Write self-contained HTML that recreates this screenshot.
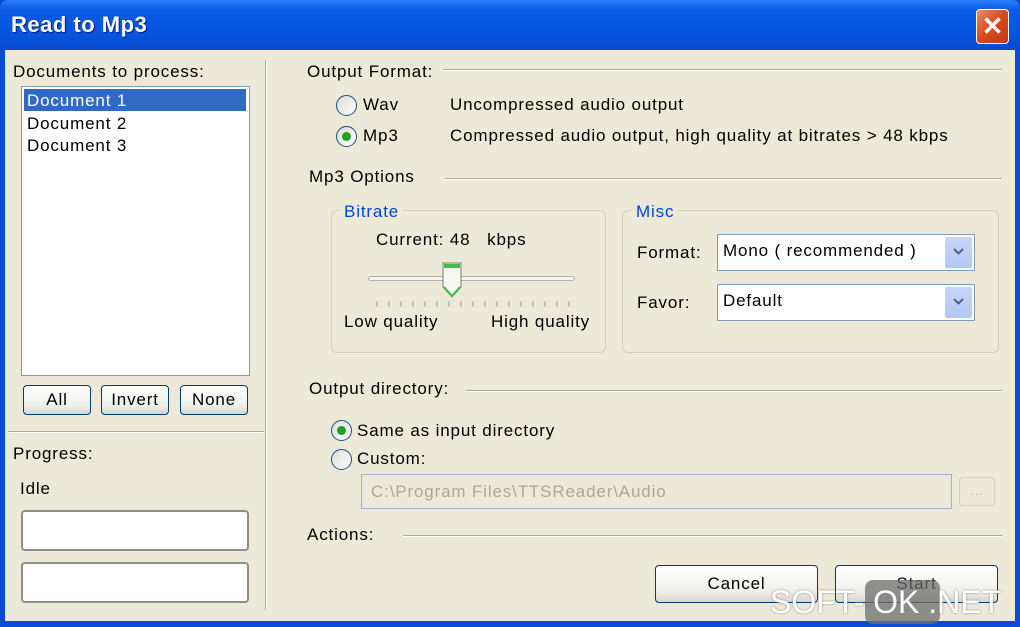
<!DOCTYPE html>
<html><head><meta charset="utf-8"><style>
*{box-sizing:border-box;margin:0;padding:0}
body{width:1020px;height:627px;overflow:hidden;background:#0a4bd6;font-family:"Liberation Sans",sans-serif;font-size:17px;letter-spacing:0.85px;color:#000;position:relative}
.a{position:absolute;white-space:nowrap}
.win{position:absolute;left:5px;top:50px;width:1010px;height:571px;background:#ECE9D8}
.title{position:absolute;left:0;top:0;width:1020px;height:50px;background:linear-gradient(#2a7ef5,#0a5ae6 20%,#0654e0 70%,#0748c8);border-radius:8px 8px 0 0}
.btn{position:absolute;border:1px solid #003c74;border-radius:4px;background:linear-gradient(#fff,#f0f0ea 70%,#d8d6cc);text-align:center}
.hl{position:absolute;height:2px;border-top:1px solid #aca899;border-bottom:1px solid #fff}
.radio{position:absolute;width:21px;height:21px;border-radius:50%;border:1px solid #1c5180;background:linear-gradient(135deg,#dcdcd6,#fff)}
.radio.on::after{content:"";position:absolute;left:5px;top:5px;width:9px;height:9px;border-radius:50%;background:#21a121}
.grp{position:absolute;border:1px solid #d0d0bf;border-radius:6px}
.combo{position:absolute;border:1px solid #7f9db9;background:#fff;padding:6px 0 0 5px}
.dd{position:absolute;right:2px;top:2px;bottom:2px;width:27px;background:linear-gradient(#c6d5fc,#b3c8f5);border-radius:2px}
.dd svg{position:absolute;left:8px;top:11px}
.box{position:absolute;border:2px solid #8e8f8a;border-radius:4px;background:#fff}
</style></head><body>
<div class="title"></div>
<div class="a" style="left:11px;top:12px;font-size:22px;font-weight:bold;color:#fff;letter-spacing:0.5px;text-shadow:1px 1px 1px #0a1e6e">Read to Mp3</div>
<div class="a" style="left:976px;top:9px;width:33px;height:35px;border:1px solid #fff;border-radius:4px;background:linear-gradient(135deg,#e88a6a,#d8491f 50%,#c2381a);color:#fff;font-size:26px;font-weight:bold;text-align:center;line-height:32px;letter-spacing:0">✕</div>
<div class="win"></div>
<div class="a" style="left:13px;top:62px">Documents to process:</div>
<div class="a" style="left:21px;top:86px;width:229px;height:290px;border:1px solid #7f9db9;background:#fff"></div>
<div class="a" style="left:24px;top:89px;width:222px;height:22px;background:#316AC5"></div>
<div class="a" style="left:27px;top:91px;color:#fff">Document 1</div>
<div class="a" style="left:27px;top:114px">Document 2</div>
<div class="a" style="left:27px;top:136px">Document 3</div>
<div class="btn" style="left:23px;top:385px;width:68px;height:30px;line-height:28px">All</div>
<div class="btn" style="left:101px;top:385px;width:68px;height:30px;line-height:28px">Invert</div>
<div class="btn" style="left:180px;top:385px;width:68px;height:30px;line-height:28px">None</div>
<div class="hl" style="left:8px;top:431px;width:256px"></div>
<div class="a" style="left:265px;top:60px;width:2px;height:550px;border-left:1px solid #aca899;border-right:1px solid #fff"></div>
<div class="a" style="left:13px;top:444px">Progress:</div>
<div class="a" style="left:20px;top:479px">Idle</div>
<div class="box" style="left:21px;top:510px;width:228px;height:41px"></div>
<div class="box" style="left:21px;top:562px;width:228px;height:41px"></div>

<div class="a" style="left:307px;top:62px">Output Format:</div>
<div class="hl" style="left:443px;top:69px;width:559px"></div>
<div class="radio" style="left:336px;top:95px"></div>
<div class="a" style="left:363px;top:95px">Wav</div>
<div class="a" style="left:450px;top:95px">Uncompressed audio output</div>
<div class="radio on" style="left:336px;top:126px"></div>
<div class="a" style="left:363px;top:126px">Mp3</div>
<div class="a" style="left:450px;top:126px">Compressed audio output, high quality at bitrates &gt; 48 kbps</div>
<div class="a" style="left:309px;top:167px">Mp3 Options</div>
<div class="hl" style="left:445px;top:178px;width:557px"></div>

<div class="grp" style="left:331px;top:210px;width:275px;height:143px"></div>
<div class="a" style="left:340px;top:202px;background:#ECE9D8;padding:0 4px;color:#0046d5">Bitrate</div>
<div class="a" style="left:376px;top:230px">Current: 48&nbsp;&nbsp;&nbsp;kbps</div>
<div class="a" style="left:368px;top:276px;width:207px;height:5px;border:1px solid #b0b0a8;border-radius:3px;background:#f4f4f0"></div>
<svg class="a" style="left:441px;top:262px" width="22" height="38" viewBox="0 0 22 38"><path d="M2 1h18v24l-9 10-9-10z" fill="#f6f6f2" stroke="#7a7a74"/><rect x="3" y="2" width="16" height="4" fill="#3fbf3f"/><path d="M3 25l8 9 8-9" fill="none" stroke="#3fbf3f" stroke-width="2"/></svg>
<svg class="a" style="left:375px;top:301px" width="200" height="8"><g stroke="#a0a090"><path d="M2 0v6M14 0v6M26 0v6M38 0v6M50 0v6M62 0v6M74 0v6M86 0v6M98 0v6M110 0v6M122 0v6M134 0v6M146 0v6M158 0v6M170 0v6M182 0v6M194 0v6"/></g></svg>
<div class="a" style="left:344px;top:312px">Low quality</div>
<div class="a" style="left:491px;top:312px">High quality</div>

<div class="grp" style="left:622px;top:210px;width:377px;height:143px"></div>
<div class="a" style="left:632px;top:202px;background:#ECE9D8;padding:0 4px;color:#0046d5">Misc</div>
<div class="a" style="left:637px;top:243px">Format:</div>
<div class="combo" style="left:717px;top:234px;width:258px;height:37px">Mono ( recommended )<div class="dd"><svg width="11" height="8"><path d="M1 1l4.5 4.5L10 1" fill="none" stroke="#4d6185" stroke-width="2"/></svg></div></div>
<div class="a" style="left:637px;top:293px">Favor:</div>
<div class="combo" style="left:717px;top:284px;width:258px;height:37px">Default<div class="dd"><svg width="11" height="8"><path d="M1 1l4.5 4.5L10 1" fill="none" stroke="#4d6185" stroke-width="2"/></svg></div></div>

<div class="a" style="left:309px;top:379px">Output directory:</div>
<div class="hl" style="left:466px;top:390px;width:536px"></div>
<div class="radio on" style="left:331px;top:420px"></div>
<div class="a" style="left:357px;top:421px">Same as input directory</div>
<div class="radio" style="left:331px;top:449px"></div>
<div class="a" style="left:357px;top:449px">Custom:</div>
<div class="a" style="left:361px;top:474px;width:591px;height:35px;border:1px solid #a0b4c8;background:#ECE9D8;color:#aca899;padding:7px 0 0 9px">C:\Program Files\TTSReader\Audio</div>
<div class="a" style="left:959px;top:477px;width:36px;height:29px;border:1px solid #d0d0c4;border-radius:4px;color:#aca899;text-align:center;font-size:12px;line-height:26px">...</div>
<div class="a" style="left:307px;top:525px">Actions:</div>
<div class="hl" style="left:403px;top:535px;width:599px"></div>
<div class="btn" style="left:655px;top:565px;width:163px;height:38px;line-height:36px">Cancel</div>
<div class="btn" style="left:835px;top:565px;width:163px;height:38px;line-height:36px">Start</div>
<div class="a" style="left:865px;top:580px;width:75px;height:44px;background:rgba(110,110,110,.75);border-radius:8px"></div>
<div class="a" style="left:770px;top:584px;font-size:32px;letter-spacing:0;color:#fff;text-shadow:0 0 2px #888">SOFT-&nbsp;OK&nbsp;.NET</div>
</body></html>
